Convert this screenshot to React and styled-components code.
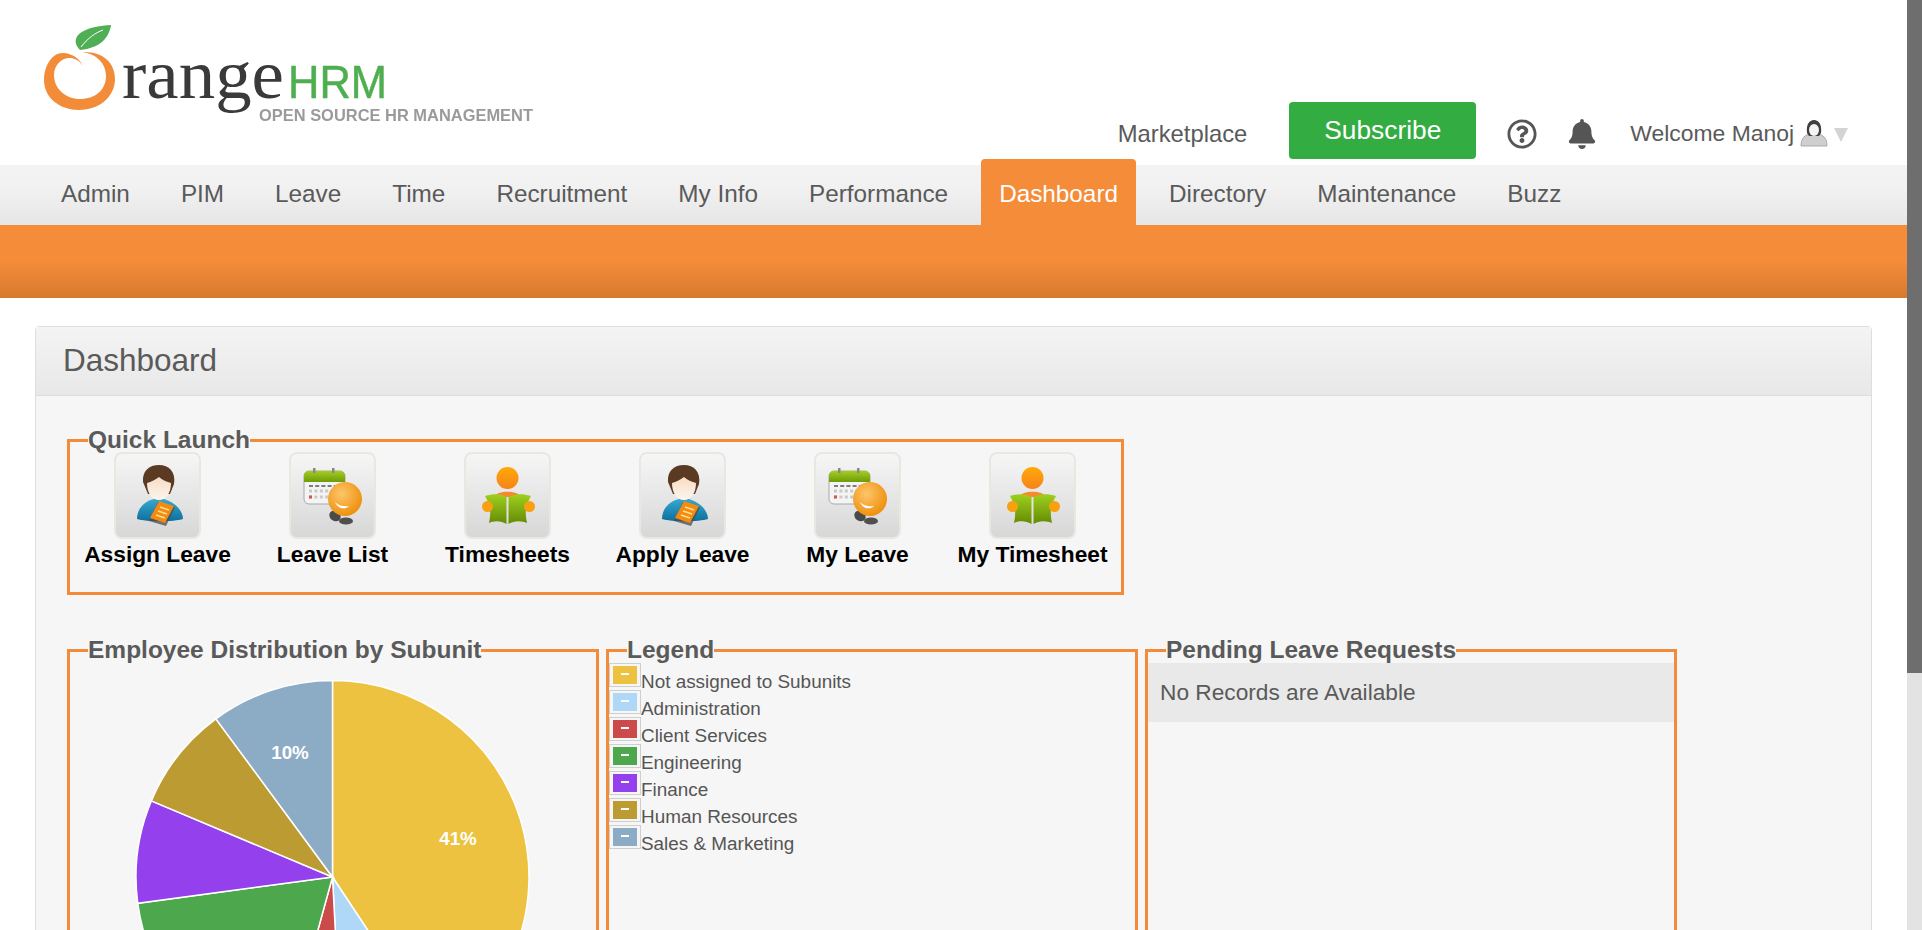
import React from 'react';
import styled, { createGlobalStyle } from 'styled-components';
import { FaRegQuestionCircle, FaBell } from 'react-icons/fa';

const GlobalStyle = createGlobalStyle`
  html, body {
    margin: 0;
    padding: 0;
    height: 100%;
    overflow: hidden;
    background: #fff;
    font-family: "Liberation Sans", Arial, sans-serif;
    color: #5a5a5a;
  }
`;

const Shell = styled.div`
  display: flex;
  height: 930px;
  overflow: hidden;
`;

const Page = styled.div`
  flex: 1;
  min-width: 0;
`;

const ScrollTrack = styled.div`
  width: 15px;
  flex: none;
  background: #e3e3e3;
`;

const ScrollThumb = styled.div`
  height: 673px;
  background: #6e6e6e;
`;

const Header = styled.header`
  height: 165px;
  display: flex;
  justify-content: space-between;
  align-items: flex-start;
  padding-right: 59px;
`;

const LogoArt = styled.svg`
  flex: none;
  filter: blur(0.45px);
`;

const HeaderRight = styled.div`
  display: flex;
  align-items: center;
  margin-top: 108px;
  height: 51px;
  font-size: 23.8px;
`;

const Marketplace = styled.a`
  margin-right: 42px;
  color: #5a5a5a;
`;

const SubscribeButton = styled.button`
  width: 187px;
  height: 57px;
  margin-top: -6px;
  margin-right: 31px;
  border: 0;
  border-radius: 4px;
  background: #33ac41;
  color: #fff;
  font: 26.3px "Liberation Sans", Arial, sans-serif;
  padding: 0 0 1px;
`;

const IconSlot = styled.span`
  display: flex;
  color: #555;
  margin-right: ${(p) => p.$gap}px;
`;

const Welcome = styled.span`
  font-size: 22.9px;
  margin-right: 6px;
  color: #5a5a5a;
`;

const Caret = styled.span`
  width: 0;
  height: 0;
  margin: 3px 0 0 6px;
  border-left: 7px solid transparent;
  border-right: 7px solid transparent;
  border-top: 14px solid #d4d4d4;
`;

const Nav = styled.nav`
  height: 60px;
  display: flex;
  gap: 15px;
  padding-left: 43px;
  background: linear-gradient(#f3f3f3, #f1f1f1 40%, #e6e6e6);
`;

const NavItem = styled.a`
  box-sizing: border-box;
  height: 66px;
  margin-top: -6px;
  padding: 20px 18px 16px;
  font-size: 24.3px;
  line-height: 30px;
  border-radius: 4px 4px 0 0;
  color: ${(p) => (p.$active ? '#fff' : '#5a5a5a')};
  background: ${(p) => (p.$active ? '#f48c3a' : 'transparent')};
`;

const OrangeBand = styled.div`
  height: 73px;
  background: linear-gradient(#f48c3a, #f48c3a 50%, #d77a2e);
`;

const Content = styled.main`
  padding: 28px 35px 0;
`;

const Card = styled.section`
  border: 1px solid #dedede;
  border-radius: 4px;
  background: #f6f6f6;
`;

const CardHeader = styled.div`
  box-sizing: border-box;
  height: 69px;
  padding: 0 0 2px 27px;
  display: flex;
  align-items: center;
  font-size: 31.5px;
  color: #5a5a5a;
  border-bottom: 1px solid #dcdcdc;
  background: linear-gradient(#f4f4f4, #e8e8e8);
`;

const CardBody = styled.div`
  padding: 31px 31px 0;
  display: flex;
  flex-direction: column;
  gap: 42px;
`;

const Group = styled.fieldset`
  box-sizing: border-box;
  margin: 0;
  padding: 0;
  min-width: 0;
  border: 3px solid #f48b39;
  width: ${(p) => p.$width}px;
  min-height: ${(p) => p.$minHeight || 0}px;
`;

const GroupTitle = styled.legend`
  margin-left: 18px;
  padding: 0;
  font-size: 24.5px;
  line-height: 26px;
  font-weight: 700;
  color: #5a5a5a;
  white-space: nowrap;
`;

const LaunchRow = styled.div`
  display: grid;
  grid-template-columns: repeat(6, 175px);
  padding-bottom: 25px;
`;

const LaunchItem = styled.a`
  display: flex;
  flex-direction: column;
  align-items: center;
`;

const Tile = styled.span`
  box-sizing: border-box;
  width: 87px;
  height: 87px;
  margin-top: -1px;
  border: 2px solid #e9e7df;
  border-radius: 8px;
  background: linear-gradient(#f6f6f6, #d7d7d7);
  display: block;
  svg {
    display: block;
    margin: -2px;
    filter: blur(0.3px);
  }
`;

const LaunchLabel = styled.span`
  margin-top: 2px;
  font-size: 22.75px;
  line-height: 26px;
  font-weight: 700;
  color: #000;
  white-space: nowrap;
`;

const ChartRow = styled.div`
  display: flex;
  gap: 7px;
`;

const PieArt = styled.svg`
  display: block;
  margin: 15px 0 0 64px;
`;

const LegendRow = styled.div`
  display: flex;
  height: 27px;
  font-size: 18.9px;
  color: #555;
  line-height: 38px;
`;

const Swatch = styled.span`
  box-sizing: border-box;
  flex: none;
  width: 32px;
  height: 24px;
  border: 1px solid #cfcfcf;
  padding: 2px 3px;
`;

const SwatchFill = styled.span`
  display: flex;
  align-items: center;
  justify-content: center;
  height: 18px;
  background: ${(p) => p.$color};
  &::after {
    content: '';
    width: 8px;
    height: 2px;
    margin-bottom: 3px;
    background: #fff;
  }
`;

const EmptyRow = styled.div`
  box-sizing: border-box;
  height: 59px;
  padding: 0 12px 1px;
  display: flex;
  align-items: center;
  font-size: 22.7px;
  color: #5a5a5a;
  background: #e9e9e9;
`;

const navLinks = ['Admin', 'PIM', 'Leave', 'Time', 'Recruitment', 'My Info', 'Performance', 'Dashboard', 'Directory', 'Maintenance', 'Buzz'];

const subunits = [
  { name: 'Not assigned to Subunits', color: '#edc240', from: 0, to: 146.5 },
  { name: 'Administration', color: '#afd8f8', from: 146.5, to: 177 },
  { name: 'Client Services', color: '#cb4b4b', from: 177, to: 195.4 },
  { name: 'Engineering', color: '#4da74d', from: 195.4, to: 262.3 },
  { name: 'Finance', color: '#9440ed', from: 262.3, to: 292.8 },
  { name: 'Human Resources', color: '#bd9b33', from: 292.8, to: 323.6 },
  { name: 'Sales & Marketing', color: '#8cacc6', from: 323.6, to: 360 },
];

const slicePath = (from, to, cx = 198.5, cy = 199, r = 196.5) => {
  const point = (deg) => {
    const a = (deg * Math.PI) / 180;
    return `${cx + r * Math.sin(a)} ${cy - r * Math.cos(a)}`;
  };
  return `M${cx} ${cy} L${point(from)} A${r} ${r} 0 ${to - from > 180 ? 1 : 0} 1 ${point(to)} Z`;
};

const Logo = () => (
  <LogoArt width="540" height="165" viewBox="0 0 540 165">
    <path fill="#f28c38" d="M83 67C81 60 74 54 64 53C52 52 44 66 44 80C44 98 60 110 79 110C100 110 115 96 115 79C115 62 102 51 82 52C92 53 106 60 106 76C106 90 95 99 80 99C66 99 54 89 54 75C54 65 62 57 71 58C77 59 81 62 83 67Z" />
    <path fill="#50ae55" d="M80 50C70 40 76 27 111 25C109 38 100 48 80 50Z" />
    <path fill="none" stroke="#fff" strokeWidth="1" d="M81 47C88 38 95 33 103 30" />
    <text x="122" y="98" fontFamily="Liberation Serif" fontSize="70" fill="#3a3a3a" textLength="162" lengthAdjust="spacingAndGlyphs">range</text>
    <text x="288" y="98" fontFamily="Liberation Sans" fontSize="45.5" fill="#4fae50" stroke="#4fae50" strokeWidth="0.5" textLength="99" lengthAdjust="spacingAndGlyphs">HRM</text>
    <text x="259" y="121" fontFamily="Liberation Sans" fontWeight="700" fontSize="16.5" fill="#9a9a9a" textLength="274" lengthAdjust="spacingAndGlyphs">OPEN SOURCE HR MANAGEMENT</text>
  </LogoArt>
);

const Avatar = () => (
  <svg width="28" height="27" viewBox="0 0 28 27">
    <path fill="#cfcfcf" stroke="#9c9c9c" strokeWidth="0.8" d="M1 26C1 20 3 16 9 14L19 14C25 16 27 20 27 26Z" />
    <path fill="#3f3f3f" d="M7 13C6 5 9 0 14 0C19 0 22 5 21 13L19 16L9 16Z" />
    <ellipse cx="14" cy="10" rx="5" ry="6" fill="#f3f3f3" />
  </svg>
);

const PersonIcon = () => (
  <svg width="86" height="87" viewBox="0 0 86 87">
    <defs>
      <linearGradient id="shirt" x1="0" y1="0" x2="0" y2="1">
        <stop offset="0" stopColor="#35a9cf" />
        <stop offset="1" stopColor="#0e6f9c" />
      </linearGradient>
      <linearGradient id="face" x1="0" y1="0" x2="0" y2="1">
        <stop offset="0" stopColor="#f6dcc4" />
        <stop offset="1" stopColor="#fdf6ee" />
      </linearGradient>
    </defs>
    <path fill="url(#shirt)" d="M23 67C23 56 31 49 40 47L50 47C60 50 69 58 69 67C60 70 32 70 23 67Z" />
    <path fill="#5b3a24" d="M29 30C28 19 35 13 45 13C55 13 62 20 60 32L56 42L34 42Z" />
    <path fill="url(#face)" d="M33 31C37 30 42 27 45 25C48 28 53 30 57 31C57 41 52 48 45 48C38 48 33 41 33 31Z" />
    <path fill="#4b4b4b" d="M44 50L61 55L52 74L35 69Z" opacity="0.75" />
    <path fill="#f28a14" d="M45 49L60 54L51 71L36 66Z" />
    <path fill="none" stroke="#ffe08a" strokeWidth="1.6" d="M46 55L55 58M44 59L53 62M42 63L51 66" />
  </svg>
);

const CalendarIcon = () => (
  <svg width="86" height="87" viewBox="0 0 86 87">
    <defs>
      <radialGradient id="ball" cx="0.4" cy="0.35" r="0.7">
        <stop offset="0" stopColor="#fcc66a" />
        <stop offset="1" stopColor="#ee8c08" />
      </radialGradient>
      <linearGradient id="band" x1="0" y1="0" x2="0" y2="1">
        <stop offset="0" stopColor="#a3cf1e" />
        <stop offset="1" stopColor="#6f9a0a" />
      </linearGradient>
    </defs>
    <rect x="15" y="19" width="41" height="33" rx="5" fill="#f4f4f4" stroke="#a8a8a8" />
    <path fill="url(#band)" d="M15 30V24C15 21 17 19 20 19H51C54 19 56 21 56 24V30Z" />
    <rect x="24" y="16" width="2.5" height="5" fill="#888" />
    <rect x="43" y="16" width="2.5" height="5" fill="#888" />
    <path stroke="#555" strokeWidth="1.5" strokeDasharray="4 2.2" d="M20 34H50" />
    <path stroke="#c9c9c9" strokeWidth="3" strokeDasharray="3 2.4" d="M20 39H46M20 45H44" />
    <rect x="20" y="43.5" width="3" height="3" fill="#d4574a" />
    <ellipse cx="46" cy="64" rx="6" ry="5" fill="#4a4a4a" transform="rotate(35 46 64)" />
    <ellipse cx="57" cy="69" rx="7" ry="3.6" fill="#4f4f4f" />
    <circle cx="56" cy="47" r="17" fill="url(#ball)" />
    <path fill="#fff" d="M46 50C50 54 55 55 60 54C56 58 49 57 46 50Z" />
  </svg>
);

const ReaderIcon = () => (
  <svg width="86" height="87" viewBox="0 0 86 87">
    <defs>
      <linearGradient id="book" x1="0" y1="0" x2="0" y2="1">
        <stop offset="0" stopColor="#9fd01e" />
        <stop offset="1" stopColor="#648a04" />
      </linearGradient>
      <linearGradient id="head" x1="0" y1="0" x2="0" y2="1">
        <stop offset="0" stopColor="#ffa908" />
        <stop offset="1" stopColor="#f6831a" />
      </linearGradient>
    </defs>
    <circle cx="43.5" cy="26" r="11" fill="url(#head)" />
    <path fill="#f58a2c" d="M30 45C33 38 54 38 57 45Z" />
    <path fill="url(#book)" d="M21 44C30 41 38 42 42.5 45V72C36 68 29 69 25 71C27 62 27 54 21 44Z" />
    <path fill="url(#book)" d="M67 44C58 41 50 42 44.5 45V72C51 68 58 69 63 71C61 62 61 54 67 44Z" />
    <circle cx="23.5" cy="54.5" r="5.5" fill="#f9a011" />
    <circle cx="65.5" cy="54.5" r="5.5" fill="#f9a011" />
  </svg>
);

const launchItems = [
  { label: 'Assign Leave', Icon: PersonIcon },
  { label: 'Leave List', Icon: CalendarIcon },
  { label: 'Timesheets', Icon: ReaderIcon },
  { label: 'Apply Leave', Icon: PersonIcon },
  { label: 'My Leave', Icon: CalendarIcon },
  { label: 'My Timesheet', Icon: ReaderIcon },
];

const App = () => (
  <Shell>
    <GlobalStyle />
    <Page>
      <Header>
        <Logo />
        <HeaderRight>
          <Marketplace>Marketplace</Marketplace>
          <SubscribeButton>Subscribe</SubscribeButton>
          <IconSlot $gap={30}>
            <FaRegQuestionCircle size={30} />
          </IconSlot>
          <IconSlot $gap={33}>
            <FaBell size={30} />
          </IconSlot>
          <Welcome>Welcome Manoj</Welcome>
          <Avatar />
          <Caret />
        </HeaderRight>
      </Header>
      <Nav>
        {navLinks.map((link) => (
          <NavItem key={link} $active={link === 'Dashboard'}>
            {link}
          </NavItem>
        ))}
      </Nav>
      <OrangeBand />
      <Content>
        <Card>
          <CardHeader>Dashboard</CardHeader>
          <CardBody>
            <Group $width={1057}>
              <GroupTitle>Quick Launch</GroupTitle>
              <LaunchRow>
                {launchItems.map(({ label, Icon }) => (
                  <LaunchItem key={label}>
                    <Tile>
                      <Icon />
                    </Tile>
                    <LaunchLabel>{label}</LaunchLabel>
                  </LaunchItem>
                ))}
              </LaunchRow>
            </Group>
            <ChartRow>
              <Group $width={532} $minHeight={460}>
                <GroupTitle>Employee Distribution by Subunit</GroupTitle>
                <PieArt width="396" height="396" viewBox="0 0 396 396">
                  {subunits.map((s) => (
                    <path key={s.name} d={slicePath(s.from, s.to)} fill={s.color} stroke="#fff" strokeWidth="1.5" />
                  ))}
                  <text x="156" y="81" textAnchor="middle" fill="#fff" fontSize="18.75" fontWeight="700" fontFamily="Liberation Sans">10%</text>
                  <text x="324" y="167" textAnchor="middle" fill="#fff" fontSize="18.75" fontWeight="700" fontFamily="Liberation Sans">41%</text>
                </PieArt>
              </Group>
              <Group $width={532} $minHeight={460}>
                <GroupTitle>Legend</GroupTitle>
                {subunits.map((s) => (
                  <LegendRow key={s.name}>
                    <Swatch>
                      <SwatchFill $color={s.color} />
                    </Swatch>
                    {s.name}
                  </LegendRow>
                ))}
              </Group>
              <Group $width={532} $minHeight={460}>
                <GroupTitle>Pending Leave Requests</GroupTitle>
                <EmptyRow>No Records are Available</EmptyRow>
              </Group>
            </ChartRow>
          </CardBody>
        </Card>
      </Content>
    </Page>
    <ScrollTrack>
      <ScrollThumb />
    </ScrollTrack>
  </Shell>
);

export default App;
